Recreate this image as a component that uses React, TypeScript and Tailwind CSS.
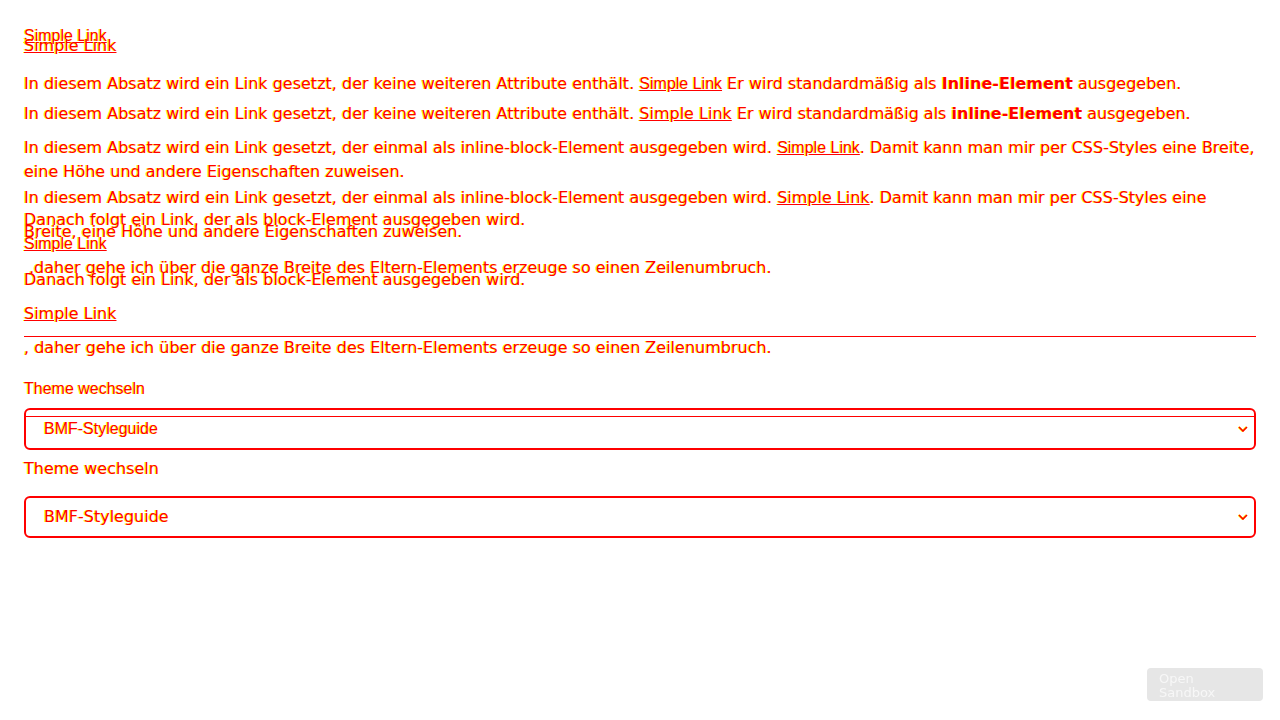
import React from "react";

// red glyphs with a yellow fringe, as in the reference
const ink = "text-[#ff0000] [text-shadow:-1px_0_0_#ffff00]";
const dv = "font-['DejaVu_Sans',sans-serif]";
const lib = "font-['Liberation_Sans',Arial,sans-serif]";

function Chevron() {
  return (
    <svg width="10" height="6" viewBox="0 0 10 6" className="shrink-0">
      <path d="M1 1 L5 5 L9 1" fill="none" stroke="#ffff00" strokeWidth="2" transform="translate(-0.6 0)" />
      <path d="M1 1 L5 5 L9 1" fill="none" stroke="#ff0000" strokeWidth="1.6" />
    </svg>
  );
}

function ThemeSelect({ fontClass }: { fontClass: string }) {
  return (
    <div className="flex h-[42px] items-center justify-between rounded-[6px] border-2 border-[#ff0000] pl-[18px] pr-[6px]">
      <span className={`${fontClass} ${ink} text-base leading-6`}>BMF-Styleguide</span>
      <Chevron />
    </div>
  );
}

// first layer: links, label and select in Liberation Sans
function LayerA() {
  return (
    <div className={`px-6 pt-6 ${dv} text-base leading-6 ${ink}`}>
      <a className={`block w-fit ${lib} underline`}>Simple Link</a>
      <p className="mt-6">
        In diesem Absatz wird ein Link gesetzt, der keine weiteren Attribute enthält.{" "}
        <a className={`${lib} underline`}>Simple Link</a> Er wird standardmäßig als{" "}
        <strong className="font-bold">Inline-Element</strong> ausgegeben.
      </p>
      <p className="mt-10">
        In diesem Absatz wird ein Link gesetzt, der einmal als inline-block-Element ausgegeben wird.{" "}
        <a className={`inline-block ${lib} underline`}>Simple Link</a>. Damit kann man mir per CSS-Styles eine Breite,
        <br />
        eine Höhe und andere Eigenschaften zuweisen.
      </p>
      <p className="mt-6">Danach folgt ein Link, der als block-Element ausgegeben wird.</p>
      <a className={`block w-fit ${lib} underline`}>Simple Link</a>
      <p className="pl-[5px]">,daher gehe ich über die ganze Breite des Eltern-Elements erzeuge so einen Zeilenumbruch.</p>
      <label className={`mt-[97px] block ${lib}`}>Theme wechseln</label>
      <div className="mt-[7px]">
        <ThemeSelect fontClass={lib} />
      </div>
    </div>
  );
}

// second layer: everything in DejaVu Sans
function LayerB() {
  return (
    <div className={`px-6 pt-[34px] ${dv} text-base leading-6 ${ink}`}>
      <a className="block w-fit underline">Simple Link</a>
      <p className="mt-11">
        In diesem Absatz wird ein Link gesetzt, der keine weiteren Attribute enthält.{" "}
        <a className="underline">Simple Link</a> Er wird standardmäßig als{" "}
        <strong className="font-bold">inline-Element</strong> ausgegeben.
      </p>
      <p className="mt-[60px]">
        In diesem Absatz wird ein Link gesetzt, der einmal als inline-block-Element ausgegeben wird.{" "}
        <a className="mb-[10px] inline-block underline">Simple Link</a>. Damit kann man mir per CSS-Styles eine
        <br />
        Breite, eine Höhe und andere Eigenschaften zuweisen.
      </p>
      <p className="mt-6">Danach folgt ein Link, der als block-Element ausgegeben wird.</p>
      <div className="mt-[10px] border-b border-[#ff0000] pb-[10px]">
        <a className="block w-fit underline">Simple Link</a>
      </div>
      <p className="pt-px leading-5">, daher gehe ich über die ganze Breite des Eltern-Elements erzeuge so einen Zeilenumbruch.</p>
      <div className="mt-[58px] h-px bg-[#ff0000]" />
      <label className="mt-10 block">Theme wechseln</label>
      <div className="mt-[15px]">
        <ThemeSelect fontClass={dv} />
      </div>
    </div>
  );
}

export default function App() {
  return (
    <div className="relative h-[720px] w-full overflow-hidden bg-white">
      <LayerA />
      <div className="absolute inset-x-0 top-0">
        <LayerB />
      </div>
      <button
        className={`fixed bottom-[19px] right-[17px] h-[33px] w-[116px] rounded-[4px] bg-[#e6e6e6] pl-3 pt-[2px] text-left ${dv} text-[13px] leading-[14px] text-[#f7f7f7]`}
      >
        Open
        <br />
        Sandbox
      </button>
    </div>
  );
}
